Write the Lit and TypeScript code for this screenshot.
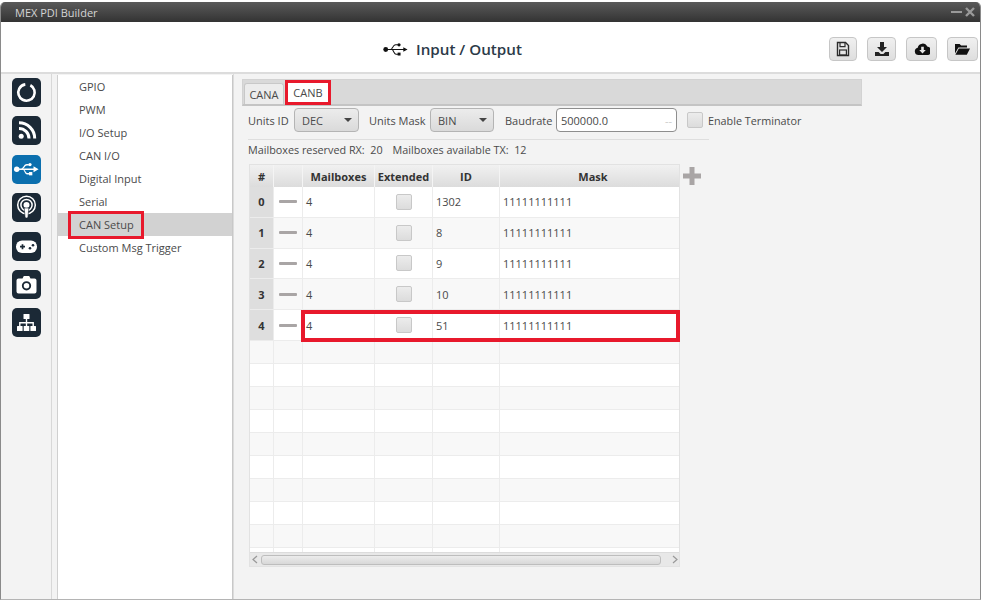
import { LitElement, html, css, svg } from "lit";
import { customElement } from "lit/decorators.js";

const tileIcons = [
  svg`<circle cx="14.5" cy="14.5" r="8.2" fill="none" stroke="#fff" stroke-width="2.6" stroke-dasharray="46 6" transform="rotate(-62 14.5 14.5)"/>`,
  svg`<g fill="none" stroke="#fff" stroke-width="3"><path d="M7 12.5a10 10 0 0 1 10 10"/><path d="M7 6.8a15.7 15.7 0 0 1 15.7 15.7"/></g><circle cx="9.2" cy="20.3" r="2.5" fill="#fff"/>`,
  svg`<g transform="translate(2 6.3) scale(.039)" fill="#fff"><circle cx="70" cy="205" r="70"/><path d="M130 185h370v-55l130 75-130 75v-55H130z"/><path d="M150 205c90 0 90-135 180-135h50v40h-50c-60 0-60 95-125 95zM205 205c65 0 65 135 135 135h50v-40h-50c-45 0-50-95-115-95z"/><circle cx="410" cy="85" r="42"/><rect x="385" y="275" width="85" height="85"/></g>`,
  svg`<g fill="none" stroke="#fff"><circle cx="14.5" cy="12" r="8.8" stroke-width="1.5"/><circle cx="14.5" cy="12" r="5.6" stroke-width="1.5"/></g><circle cx="14.5" cy="12" r="3" fill="#fff"/><path d="M12.2 15h4.6l-.8 8.6a1.4 1.4 0 0 1-3 0z" fill="#fff" stroke="#1b2936" stroke-width=".6"/>`,
  svg`<rect x="4" y="8.5" width="21" height="12.5" rx="6" fill="#fff"/><path d="M8 14.7h5M10.5 12.2v5" stroke="#1b2936" stroke-width="1.7"/><circle cx="18" cy="16.3" r="1.3" fill="#1b2936"/><circle cx="21" cy="13.3" r="1.3" fill="#1b2936"/>`,
  svg`<path d="M6.5 8.5h4l1.3-2.5h5.4l1.3 2.5h4a2 2 0 0 1 2 2v11a2 2 0 0 1-2 2h-16a2 2 0 0 1-2-2v-11a2 2 0 0 1 2-2z" fill="#fff"/><circle cx="14.5" cy="15.8" r="3.7" fill="none" stroke="#1b2936" stroke-width="1.9"/>`,
  svg`<g fill="#fff"><rect x="11.5" y="6" width="6" height="5" rx=".6"/><rect x="5" y="18" width="5.6" height="5" rx=".6"/><rect x="11.7" y="18" width="5.6" height="5" rx=".6"/><rect x="18.4" y="18" width="5.6" height="5" rx=".6"/></g><path d="M14.5 11v7M7.8 18v-3.3h13.4V18" fill="none" stroke="#fff" stroke-width="1.4"/>`,
];

const toolIcons = [
  svg`<path d="M2.5 1.5h8l3 3v10h-11z" fill="none" stroke="#2b2b2b" stroke-width="1.4"/><path d="M5 2v3.6h5V2" fill="none" stroke="#2b2b2b" stroke-width="1.2"/><rect x="4.6" y="9" width="6.8" height="5" fill="none" stroke="#2b2b2b" stroke-width="1.2"/>`,
  svg`<path d="M6 1h4v5h3l-5 5-5-5h3z" fill="#222"/><path d="M1 11h3.6l2 2h2.8l2-2H15v4H1z" fill="#222"/>`,
  svg`<path d="M4.5 14a3.7 3.7 0 0 1-.8-7.3A5 5 0 0 1 13.2 5.6 4.3 4.3 0 0 1 14 14z" fill="#111"/><path d="M7.2 5.8h2.6v3.3h2L8.5 12.6 5.2 9.1h2z" fill="#e6e6e6"/>`,
  svg`<path d="M1 3h4.6l1.5 1.6H13v2H4.4L1 12.5z" fill="#111"/><path d="M4.8 7.6H16l-3.2 6.2H1.4z" fill="#111"/>`,
];
const toolWidths = [28, 29, 31, 31];

const rows = [
  ["0", "4", "1302"],
  ["1", "4", "8"],
  ["2", "4", "9"],
  ["3", "4", "10"],
  ["4", "4", "51"],
];
const menu = ["GPIO", "PWM", "I/O Setup", "CAN I/O", "Digital Input", "Serial", "CAN Setup", "Custom Msg Trigger"];

@customElement("app-root")
export class AppRoot extends LitElement {
  static styles = css`
    :host {
      display: block;
      width: 982px;
      height: 600px;
      overflow: hidden;
      background: #fff;
      font-family: "Open Sans", "Liberation Sans", sans-serif;
      font-size: 11px;
      color: #4a4a4a;
    }
    .window {
      height: 598px;
      box-sizing: border-box;
      margin: 2px 1px 0 0;
      border-left: 1px solid #8a8a8a;
      border-right: 1px solid #8a8a8a;
      border-bottom: 1px solid #b4b4b4;
      border-radius: 5px 5px 0 0;
      display: flex;
      flex-direction: column;
      overflow: hidden;
    }
    .title {
      height: 20px;
      flex: none;
      display: flex;
      align-items: center;
      justify-content: space-between;
      padding: 0 4px 0 14px;
      background: linear-gradient(#5a5a5a, #333);
      color: #d4d4d4;
      font-size: 11px;
    }
    .winbtns { display: flex; align-items: center; }
    .head {
      height: 52px;
      flex: none;
      background: #fff;
      border-bottom: 2px solid #dcdcdc;
      box-sizing: border-box;
      position: relative;
      display: flex;
      align-items: center;
      justify-content: center;
      gap: 8px;
      padding: 3px 76px 0 0;
      font-size: 15.2px;
      font-weight: 600;
      color: #2c3a48;
    }
    .tools { position: absolute; right: 2px; top: 15px; display: flex; gap: 10px; }
    .tool {
      height: 24px;
      box-sizing: border-box;
      display: flex;
      align-items: center;
      justify-content: center;
      border: 1px solid #c6c6c6;
      border-radius: 4px;
      background: linear-gradient(#f0f0f0, #dedede);
    }
    .body { flex: 1; min-height: 0; display: flex; background: #f3f3f3; }
    .rail {
      width: 51px;
      flex: none;
      box-sizing: border-box;
      border-right: 1px solid #d8d8d8;
      padding: 4px 0 0 11px;
      display: flex;
      flex-direction: column;
      gap: 9.4px;
    }
    .tile { width: 29px; height: 29px; border-radius: 5px; background: #1b2936; display: block; }
    .tile.on { background: #0b6fae; }
    .menu {
      width: 176px;
      flex: none;
      margin: 1px 0 0 5px;
      background: #fff;
      border-left: 1px solid #d0d0d0;
      border-right: 1px solid #c8c8c8;
      box-sizing: border-box;
      display: flex;
      flex-direction: column;
    }
    .item { height: 23px; padding-left: 21px; display: flex; align-items: center; flex: none; }
    .item.sel { background: #d2d2d2; position: relative; }
    .item.sel::after {
      content: "";
      position: absolute;
      left: 10px;
      top: -2px;
      width: 70px;
      height: 22px;
      border: 3px solid #e8192c;
    }
    .main { flex: 1; min-width: 0; padding: 5px 0 0 4px; border-left: 1px solid #dcdcdc; }
    .tabs {
      width: 620px;
      margin-left: 4px;
      height: 27px;
      box-sizing: border-box;
      background: #d9d9d9;
      border: 1px solid #d2d2d2;
      border-bottom: 2px solid #c4c4c4;
      display: flex;
      align-items: flex-end;
      padding: 0 0 0 1px;
      gap: 1px;
    }
    .tab {
      width: 40px;
      height: 21px;
      box-sizing: border-box;
      display: flex;
      align-items: center;
      justify-content: center;
      background: #ececec;
      border: 1px solid #c8c8c8;
      border-bottom: 0;
      border-radius: 3px 3px 0 0;
    }
    .tab.on {
      width: 46px;
      background: #fff;
      border: 3px solid #e8192c;
      border-radius: 0;
      height: 25px;
      margin-bottom: -1px;
    }
    .ctrls { margin: 2px 0 0 10px; display: flex; align-items: center; height: 24px; }
    .lbl-a { width: 46px; flex: none; }
    .lbl-b { width: 61px; flex: none; margin-left: 10px; }
    .lbl-c { width: 51px; flex: none; margin-left: 11px; }
    .sel-box {
      height: 24px;
      box-sizing: border-box;
      border: 1px solid #b4b4b4;
      border-radius: 4px;
      background: linear-gradient(#ececec, #dadada);
      display: flex;
      align-items: center;
      justify-content: space-between;
      padding: 0 6px 0 7px;
    }
    .caret { width: 0; height: 0; border: 4px solid transparent; border-top: 4px solid #444; border-bottom: 0; }
    .input {
      width: 121px;
      height: 24px;
      box-sizing: border-box;
      border: 1px solid #8e8e8e;
      border-radius: 4px;
      background: #fff;
      display: flex;
      align-items: center;
      justify-content: space-between;
      padding: 0 4px;
    }
    .input i { color: #ccc; font-style: normal; }
    .check {
      width: 16px;
      height: 16px;
      box-sizing: border-box;
      border: 1px solid #c8c8c8;
      border-radius: 2px;
      background: linear-gradient(#ececec, #dcdcdc);
      display: block;
      flex: none;
    }
    .term { margin: 0 5px 0 10px; }
    .term-label { font-size: 10.8px; }
    .info {
      width: 461px;
      margin: 7px 0 0 10px;
      height: 25px;
      box-sizing: border-box;
      border-top: 1px solid #dedede;
      padding-bottom: 5px;
      display: flex;
      align-items: center;
      gap: 10px;
      font-size: 10.8px;
    }
    .table-wrap { display: flex; margin: 0 0 0 11px; height: 403px; }
    .table {
      width: 431px;
      box-sizing: border-box;
      border: 1px solid #e2e2e2;
      display: flex;
      flex-direction: column;
      position: relative;
    }
    .grid {
      display: grid;
      grid-template-columns: 24px 29px 72px 58px 67px 1fr;
      flex: none;
    }
    .grid > div {
      border-right: 1px solid #ececec;
      border-bottom: 1px solid #ececec;
      display: flex;
      align-items: center;
      box-sizing: border-box;
      min-width: 0;
    }
    .grid > div:last-child { border-right: 0; }
    .hd { height: 22px; }
    .hd > div {
      background: linear-gradient(#f1f1f1, #dcdcdc);
      font-weight: 700;
      color: #333;
      justify-content: center;
      border-bottom: 0;
      border-right-color: #f4f4f4;
      white-space: nowrap;
    }
    .hd > div:last-child { padding-left: 7px; }
    .row { height: 30.8px; background: #fff; }
    .row.alt { background: #f8f8f8; }
    .row.plain { background: #fff; }
    .row > div { padding-left: 3px; }
    .row > .num {
      background: #dedede;
      font-weight: 700;
      justify-content: center;
      padding: 0;
      color: #333;
    }
    .row > .dash { padding: 0; justify-content: center; }
    .dash b { display: block; width: 18px; height: 3px; background: #a9a5a5; border-radius: 1px; }
    .row > .mid { justify-content: center; padding: 0; }
    .empty { height: 23px; background: #fff; }
    .empty.alt { background: #f8f8f8; }
    .rows { flex: 1; min-height: 0; overflow: hidden; }
    .hi {
      position: absolute;
      left: 51px;
      top: 145px;
      right: -1px;
      height: 32px;
      border: 4px solid #e8192c;
      box-sizing: border-box;
    }
    .scroll {
      height: 14px;
      flex: none;
      background: #e8e8e8;
      border-top: 1px solid #dcdcdc;
      box-sizing: border-box;
      display: flex;
      align-items: center;
      gap: 3px;
      padding: 0 1px 0 2px;
    }
    .thumb {
      width: 400px;
      height: 10px;
      box-sizing: border-box;
      border: 1px solid #bdbdbd;
      border-radius: 3px;
      background: linear-gradient(#ececec, #d8d8d8);
      margin-right: auto;
    }
    .plus { margin: 2px 0 0 2px; width: 20px; height: 20px; display: block; }
  `;

  private tile(i: number) {
    return html`<svg class="tile ${i === 2 ? "on" : ""}" viewBox="0 0 29 29">${tileIcons[i]}</svg>`;
  }

  private select(label: string, width: number) {
    return html`<div class="sel-box" style="width:${width}px">${label}<span class="caret"></span></div>`;
  }

  render() {
    return html`
      <div class="window">
        <div class="title">
          <span>MEX PDI Builder</span>
          <span class="winbtns">
            <svg width="26" height="10" viewBox="0 0 26 10"><path d="M1 5h11" stroke="#9a9a9a" stroke-width="2"/><path d="M16 1l8 8M24 1l-8 8" stroke="#9a9a9a" stroke-width="2.4"/></svg>
          </span>
        </div>
        <div class="head">
          <svg width="25" height="14" viewBox="0 0 25 14"><g transform="translate(0 -.5) scale(.039)" fill="#111"><circle cx="70" cy="205" r="62"/><path d="M120 190h400v-45l110 60-110 60v-45H120z"/><path d="M160 205c80 0 80-135 170-135h50v26h-50c-70 0-70 125-150 125zM200 205c65 0 65 135 140 135h50v-26h-50c-55 0-60-125-120-125z"/><circle cx="410" cy="85" r="42"/><rect x="375" y="285" width="75" height="75"/></g></svg>
          <span>Input / Output</span>
          <div class="tools">
            ${toolIcons.map((ic, i) => html`<div class="tool" style="width:${toolWidths[i]}px"><svg width="${i === 3 ? 17 : 16}" height="16" viewBox="0 0 ${i === 3 ? 17 : 16} 16">${ic}</svg></div>`)}
          </div>
        </div>
        <div class="body">
          <div class="rail">${tileIcons.map((_, i) => this.tile(i))}</div>
          <div class="menu">
            ${menu.map((m) => html`<div class="item ${m === "CAN Setup" ? "sel" : ""}">${m}</div>`)}
          </div>
          <div class="main">
            <div class="tabs">
              <div class="tab">CANA</div>
              <div class="tab on">CANB</div>
            </div>
            <div class="ctrls">
              <span class="lbl-a">Units ID</span>
              ${this.select("DEC", 65)}
              <span class="lbl-b">Units Mask</span>
              ${this.select("BIN", 64)}
              <span class="lbl-c">Baudrate</span>
              <div class="input"><span>500000.0</span><i>--</i></div>
              <span class="check term"></span>
              <span class="term-label">Enable Terminator</span>
            </div>
            <div class="info">
              <span>Mailboxes reserved RX:&nbsp; 20</span>
              <span>Mailboxes available TX:&nbsp; 12</span>
            </div>
            <div class="table-wrap">
              <div class="table">
                <div class="grid hd">
                  <div>#</div><div></div><div>Mailboxes</div><div>Extended</div><div>ID</div><div>Mask</div>
                </div>
                <div class="rows">
                  ${rows.map((r, i) => html`
                    <div class="grid row ${i === 4 ? "plain" : i % 2 ? "alt" : ""}">
                      <div class="num">${r[0]}</div>
                      <div class="dash"><b></b></div>
                      <div>${r[1]}</div>
                      <div class="mid"><span class="check"></span></div>
                      <div>${r[2]}</div>
                      <div>11111111111</div>
                    </div>`)}
                  ${Array.from({ length: 10 }, (_, i) => html`
                    <div class="grid empty ${i % 2 === 0 ? "alt" : ""}">
                      <div></div><div></div><div></div><div></div><div></div><div></div>
                    </div>`)}
                </div>
                <div class="scroll">
                  <svg width="6" height="9" viewBox="0 0 6 9"><path d="M5 1L1 4.5 5 8" fill="none" stroke="#999" stroke-width="1.2"/></svg>
                  <div class="thumb"></div>
                  <svg width="6" height="9" viewBox="0 0 6 9"><path d="M1 1l4 3.5L1 8" fill="none" stroke="#999" stroke-width="1.2"/></svg>
                </div>
                <div class="hi"></div>
              </div>
              <svg class="plus" viewBox="0 0 20 20"><path d="M7.5 1h5v6.5H19v5h-6.5V19h-5v-6.5H1v-5h6.5z" fill="#a9a5a5"/></svg>
            </div>
          </div>
        </div>
      </div>
    `;
  }
}
